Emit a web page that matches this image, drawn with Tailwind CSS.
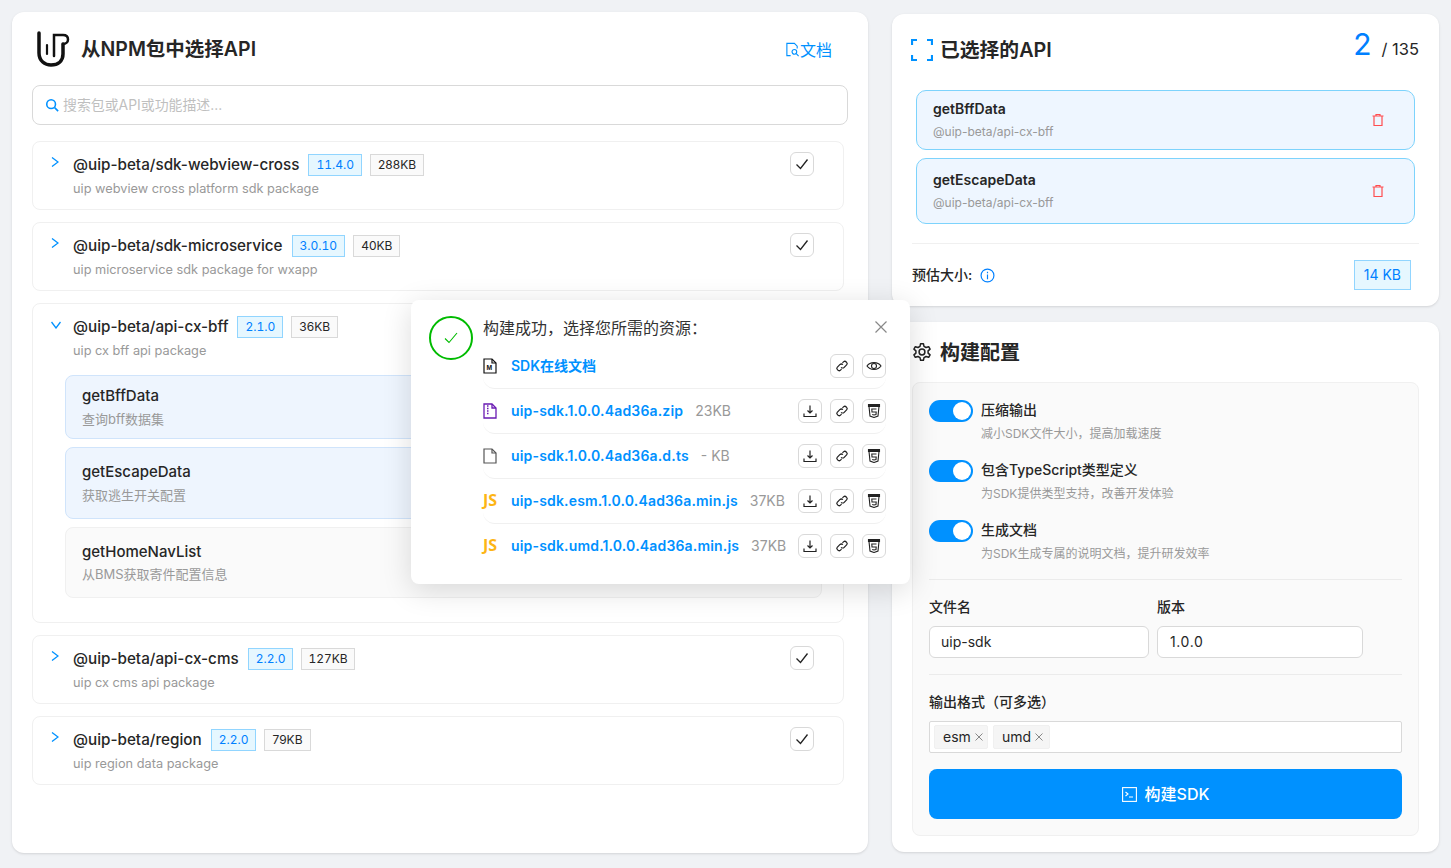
<!DOCTYPE html>
<html lang="zh-CN">

<head>
    <meta charset="UTF-8" />
    <meta name="viewport" content="width=device-width, initial-scale=1.0" />
    <title>从NPM包中选择API</title>
    <script src="https://cdn.jsdelivr.net/npm/@tailwindcss/browser@4"></script>
</head>

<body>
    <div class="relative flex h-[868px] w-[1451px] items-start gap-6 overflow-hidden bg-[#f0f2f5] px-3 font-['Inter','Noto_Sans_CJK_SC',sans-serif] text-[#262626]">

        <!-- left panel -->
        <div class="mt-3 h-[841px] w-[856px] shrink-0 rounded-xl bg-white px-5 shadow-sm">
            <div class="flex h-[73px] items-center">
                <svg class="ml-1 mr-[9px] mt-[3px] h-[38px] w-[36px] shrink-0" viewBox="0 0 36 38" fill="none" stroke="#111" stroke-linecap="round">
                    <path d="M3 2V22C3 30 9 34 15 34C22 34 27 30 27 23V13" stroke-width="3.5" />
                    <path d="M11 14V23" stroke-width="2.2" />
                    <path d="M18 25V4H27C30.500 4 32 6 32 8.500C32 11 30 13 27 13" stroke-width="2.500" />
                </svg>
                <h1 class="mt-[2px] text-[19.5px] font-semibold text-[#262626]">从NPM包中选择API</h1>
                <a class="ml-auto mr-4 mt-[2px] flex items-center text-base text-[#0091ff]">
                    <svg class="h-[15px] w-[15px]" viewBox="0 0 16 16" fill="none" stroke="currentColor" stroke-width="1.200">
                        <path d="M6 14.500H2V1.500H10L13 4.500V7" />
                        <circle cx="10" cy="10.500" r="2.500" />
                        <path d="M12 12.500L14.500 15" />
                    </svg>
                    文档
                </a>
            </div>

            <div class="flex h-10 w-[816px] items-center gap-1 rounded-lg border border-[#d9d9d9] px-3 text-[13.9px] text-[#bfbfbf]">
                <svg class="h-3.5 w-3.5" viewBox="0 0 16 16" fill="none" stroke="#0091ff" stroke-width="1.800">
                    <circle cx="7" cy="7" r="5" />
                    <path d="M11 11L15 15" />
                </svg>
                搜索包或API或功能描述...
            </div>

            <div class="mt-4 flex w-[812px] flex-col gap-3">
                <div class="flex h-[69px] rounded-lg border border-[#f0f0f0] pl-[18px] pr-[29px] pt-3">
                    <svg class="mr-3.5 mt-[3px] h-2.5 w-2 shrink-0" viewBox="0 0 8 10" fill="none" stroke="#0091ff" stroke-width="1.300"><path d="M1 0.500L7 5L1 9.500" /></svg>
                    <div class="flex-1">
                        <div class="flex h-[22px] items-center gap-2">
                            <span class="text-[15.25px] font-medium">@uip-beta/sdk-webview-cross</span>
                            <span class="ml-[1px] flex h-[22px] items-center border border-[#91d5ff] bg-[#e6f7ff] px-[7px] text-xs tabular-nums text-[#0080ff]">11.4.0</span>
                            <span class="flex h-[22px] items-center border border-[#d9d9d9] bg-[#fafafa] px-[7px] text-xs">288KB</span>
                        </div>
                        <p class="mt-[3px] text-[12.75px] leading-5 text-[#999]">uip webview cross platform sdk package</p>
                    </div>
                    <span class="-mt-[2px] flex h-6 w-6 items-center justify-center rounded-md border border-[#d9d9d9]">
                        <svg class="h-4 w-4" viewBox="0 0 16 16" fill="none" stroke="#222" stroke-width="1.300"><path d="M2.500 8.500L6.500 12.500L13.500 3.500" /></svg>
                    </span>
                </div>

                <div class="flex h-[69px] rounded-lg border border-[#f0f0f0] pl-[18px] pr-[29px] pt-3">
                    <svg class="mr-3.5 mt-[3px] h-2.5 w-2 shrink-0" viewBox="0 0 8 10" fill="none" stroke="#0091ff" stroke-width="1.300"><path d="M1 0.500L7 5L1 9.500" /></svg>
                    <div class="flex-1">
                        <div class="flex h-[22px] items-center gap-2">
                            <span class="text-[15.25px] font-medium">@uip-beta/sdk-microservice</span>
                            <span class="ml-[1px] flex h-[22px] items-center border border-[#91d5ff] bg-[#e6f7ff] px-[7px] text-xs tabular-nums text-[#0080ff]">3.0.10</span>
                            <span class="flex h-[22px] items-center border border-[#d9d9d9] bg-[#fafafa] px-[7px] text-xs">40KB</span>
                        </div>
                        <p class="mt-[3px] text-[12.75px] leading-5 text-[#999]">uip microservice sdk package for wxapp</p>
                    </div>
                    <span class="-mt-[2px] flex h-6 w-6 items-center justify-center rounded-md border border-[#d9d9d9]">
                        <svg class="h-4 w-4" viewBox="0 0 16 16" fill="none" stroke="#222" stroke-width="1.300"><path d="M2.500 8.500L6.500 12.500L13.500 3.500" /></svg>
                    </span>
                </div>

                <!-- expanded package -->
                <div class="h-[320px] rounded-lg border border-[#f0f0f0] pl-[18px] pr-[21px] pt-3">
                    <div class="flex pr-2">
                        <svg class="mr-3 mt-[5px] h-2 w-2.5 shrink-0" viewBox="0 0 10 8" fill="none" stroke="#0091ff" stroke-width="1.300"><path d="M0.500 1L5 7L9.500 1" /></svg>
                        <div class="flex-1">
                            <div class="flex h-[22px] items-center gap-2">
                                <span class="text-[15.25px] font-medium">@uip-beta/api-cx-bff</span>
                                <span class="ml-[1px] flex h-[22px] items-center border border-[#91d5ff] bg-[#e6f7ff] px-[7px] text-xs tabular-nums text-[#0080ff]">2.1.0</span>
                                <span class="flex h-[22px] items-center border border-[#d9d9d9] bg-[#fafafa] px-[7px] text-xs">36KB</span>
                            </div>
                            <p class="mt-[3px] text-[12.75px] leading-5 text-[#999]">uip cx bff api package</p>
                        </div>
                    </div>
                    <div class="ml-[14px] mt-[14px] flex flex-col gap-2">
                        <div class="flex h-16 flex-col justify-center rounded-lg border border-[#d0e4fb] bg-[#eef5fe] pl-4">
                            <p class="text-[15px] font-medium leading-[22px]">getBffData</p>
                            <p class="mt-[2px] text-[13px] leading-5 text-[#999]">查询bff数据集</p>
                        </div>
                        <div class="flex h-[72px] flex-col justify-center rounded-lg border border-[#d0e4fb] bg-[#eef5fe] pl-4">
                            <p class="text-[15px] font-medium leading-[22px]">getEscapeData</p>
                            <p class="mt-[2px] text-[13px] leading-5 text-[#999]">获取逃生开关配置</p>
                        </div>
                        <div class="flex h-[71px] flex-col justify-center rounded-lg border border-[#f0f0f0] bg-[#fafafa] pl-4">
                            <p class="text-[15px] font-medium leading-[22px]">getHomeNavList</p>
                            <p class="mt-[1px] text-[13px] leading-5 text-[#999]">从BMS获取寄件配置信息</p>
                        </div>
                    </div>
                </div>

                <div class="flex h-[69px] rounded-lg border border-[#f0f0f0] pl-[18px] pr-[29px] pt-3">
                    <svg class="mr-3.5 mt-[3px] h-2.5 w-2 shrink-0" viewBox="0 0 8 10" fill="none" stroke="#0091ff" stroke-width="1.300"><path d="M1 0.500L7 5L1 9.500" /></svg>
                    <div class="flex-1">
                        <div class="flex h-[22px] items-center gap-2">
                            <span class="text-[15.25px] font-medium">@uip-beta/api-cx-cms</span>
                            <span class="ml-[1px] flex h-[22px] items-center border border-[#91d5ff] bg-[#e6f7ff] px-[7px] text-xs tabular-nums text-[#0080ff]">2.2.0</span>
                            <span class="flex h-[22px] items-center border border-[#d9d9d9] bg-[#fafafa] px-[6px] text-xs tabular-nums">127KB</span>
                        </div>
                        <p class="mt-[3px] text-[12.75px] leading-5 text-[#999]">uip cx cms api package</p>
                    </div>
                    <span class="-mt-[2px] flex h-6 w-6 items-center justify-center rounded-md border border-[#d9d9d9]">
                        <svg class="h-4 w-4" viewBox="0 0 16 16" fill="none" stroke="#222" stroke-width="1.300"><path d="M2.500 8.500L6.500 12.500L13.500 3.500" /></svg>
                    </span>
                </div>

                <div class="flex h-[69px] rounded-lg border border-[#f0f0f0] pl-[18px] pr-[29px] pt-3">
                    <svg class="mr-3.5 mt-[3px] h-2.5 w-2 shrink-0" viewBox="0 0 8 10" fill="none" stroke="#0091ff" stroke-width="1.300"><path d="M1 0.500L7 5L1 9.500" /></svg>
                    <div class="flex-1">
                        <div class="flex h-[22px] items-center gap-2">
                            <span class="text-[15.25px] font-medium">@uip-beta/region</span>
                            <span class="ml-[1px] flex h-[22px] items-center border border-[#91d5ff] bg-[#e6f7ff] px-[7px] text-xs tabular-nums text-[#0080ff]">2.2.0</span>
                            <span class="flex h-[22px] items-center border border-[#d9d9d9] bg-[#fafafa] px-[7px] text-xs">79KB</span>
                        </div>
                        <p class="mt-[3px] text-[12.75px] leading-5 text-[#999]">uip region data package</p>
                    </div>
                    <span class="-mt-[2px] flex h-6 w-6 items-center justify-center rounded-md border border-[#d9d9d9]">
                        <svg class="h-4 w-4" viewBox="0 0 16 16" fill="none" stroke="#222" stroke-width="1.300"><path d="M2.500 8.500L6.500 12.500L13.500 3.500" /></svg>
                    </span>
                </div>
            </div>
        </div>

        <!-- right column -->
        <div class="mt-3.5 flex w-[547px] shrink-0 flex-col gap-4">
            <div class="h-[292px] rounded-xl bg-white px-5 shadow-sm">
                <div class="flex h-[76px] items-start pt-3">
                    <div class="flex h-12 items-center">
                        <svg class="-ml-px mr-[7px] h-[22px] w-[22px]" viewBox="0 0 22 22" fill="none" stroke="#0091ff" stroke-width="2.200">
                            <path d="M1 6V1H6M16 1H21V6M21 16V21H16M6 21H1V16" />
                        </svg>
                        <h2 class="mt-[2px] text-[19.8px] font-semibold">已选择的API</h2>
                    </div>
                    <div class="-mt-[2px] ml-auto flex items-baseline">
                        <span class="text-[30px] leading-10 text-[#0080ff]">2</span>
                        <span class="ml-2.5 text-[16.5px]">/ 135</span>
                    </div>
                </div>
                <div class="flex flex-col gap-2 pl-1 pr-1">
                    <div class="flex h-[60px] items-center justify-between rounded-[10px] border border-[#7dd3fc] bg-[#eef6ff] pl-4 pr-[29px]">
                        <div>
                            <p class="text-sm font-semibold leading-[18px]">getBffData</p>
                            <p class="mt-[6px] text-xs leading-4 text-[#999]">@uip-beta/api-cx-bff</p>
                        </div>
                        <svg class="h-3.5 w-3.5" viewBox="0 0 14 14" fill="none" stroke="#ff4d4f" stroke-width="1.200"><path d="M1.500 3H12.500M5 3V1.500H9V3M3 3V12.500H11V3" /></svg>
                    </div>
                    <div class="flex h-[66px] items-center justify-between rounded-[10px] border border-[#7dd3fc] bg-[#eef6ff] pl-4 pr-[29px]">
                        <div>
                            <p class="text-sm font-semibold leading-[18px]">getEscapeData</p>
                            <p class="mt-[6px] text-xs leading-4 text-[#999]">@uip-beta/api-cx-bff</p>
                        </div>
                        <svg class="h-3.5 w-3.5" viewBox="0 0 14 14" fill="none" stroke="#ff4d4f" stroke-width="1.200"><path d="M1.500 3H12.500M5 3V1.500H9V3M3 3V12.500H11V3" /></svg>
                    </div>
                </div>
                <div class="mt-[19px] flex h-[47px] items-end justify-between border-t border-[#f0f0f0] pr-2">
                    <div class="flex h-[30px] items-center gap-2 text-sm font-medium">
                        预估大小:
                        <svg class="h-[15px] w-[15px]" viewBox="0 0 14 14" fill="none" stroke="#0080ff" stroke-width="1.100"><circle cx="7" cy="7" r="6" /><path d="M7 6V10.500M7 3.500V4.800" /></svg>
                    </div>
                    <span class="flex h-[30px] items-center border border-[#91d5ff] bg-[#e6f7ff] px-[9px] text-sm text-[#0080ff]">14 KB</span>
                </div>
            </div>

            <div class="h-[530px] rounded-xl bg-white px-5 shadow-sm">
                <div class="flex h-[60px] items-center">
                    <svg class="mr-2 h-5 w-5" viewBox="0 0 24 24" fill="none" stroke="#222" stroke-width="1.800" stroke-linejoin="round">
                        <path d="M10.300 2H13.700L14.400 5.200L16.800 6.600L20 5.600L21.700 8.500L19.300 10.700V13.300L21.700 15.500L20 18.400L16.800 17.400L14.400 18.800L13.700 22H10.300L9.600 18.800L7.200 17.400L4 18.400L2.300 15.500L4.700 13.300V10.700L2.300 8.500L4 5.600L7.200 6.600L9.600 5.200Z" />
                        <circle cx="12" cy="12" r="3.500" />
                    </svg>
                    <h2 class="mt-[2px] text-[20px] font-semibold">构建配置</h2>
                </div>
                <div class="h-[454px] rounded-lg border border-[#f0f0f0] bg-[#fafafa] px-4 pt-[17px]">
                    <div class="flex h-[60px] items-start gap-2">
                        <span class="flex h-[22px] w-11 items-center justify-end rounded-full bg-[#0091ff] pr-0.5"><span class="h-[18px] w-[18px] rounded-full bg-white"></span></span>
                        <div>
                            <p class="text-sm font-medium leading-5">压缩输出</p>
                            <p class="mt-1 text-xs leading-5 text-[#999]">减小SDK文件大小，提高加载速度</p>
                        </div>
                    </div>
                    <div class="flex h-[60px] items-start gap-2">
                        <span class="flex h-[22px] w-11 items-center justify-end rounded-full bg-[#0091ff] pr-0.5"><span class="h-[18px] w-[18px] rounded-full bg-white"></span></span>
                        <div>
                            <p class="text-sm font-medium leading-5">包含TypeScript类型定义</p>
                            <p class="mt-1 text-xs leading-5 text-[#999]">为SDK提供类型支持，改善开发体验</p>
                        </div>
                    </div>
                    <div class="flex h-[59px] items-start gap-2">
                        <span class="flex h-[22px] w-11 items-center justify-end rounded-full bg-[#0091ff] pr-0.5"><span class="h-[18px] w-[18px] rounded-full bg-white"></span></span>
                        <div>
                            <p class="text-sm font-medium leading-5">生成文档</p>
                            <p class="mt-1 text-xs leading-5 text-[#999]">为SDK生成专属的说明文档，提升研发效率</p>
                        </div>
                    </div>
                    <div class="border-t border-[#ebebeb] pt-[17px]">
                        <div class="flex gap-2">
                            <div class="w-[220px]">
                                <p class="text-sm font-medium leading-5">文件名</p>
                                <div class="mt-[9px] flex h-8 items-center rounded-md border border-[#d9d9d9] bg-white px-[11px] text-sm">uip-sdk</div>
                            </div>
                            <div class="w-[206px]">
                                <p class="text-sm font-medium leading-5">版本</p>
                                <div class="mt-[9px] flex h-8 items-center rounded-md border border-[#d9d9d9] bg-white px-3 text-sm tracking-[0.6px]">1.0.0</div>
                            </div>
                        </div>
                    </div>
                    <div class="mt-4 border-t border-[#ebebeb] pt-[17px]">
                        <p class="text-sm font-medium leading-5">输出格式（可多选）</p>
                        <div class="mt-[9px] flex h-8 items-center gap-[5px] rounded-[2px] border border-[#d9d9d9] bg-white px-1 text-sm">
                            <span class="flex h-6 w-[54px] items-center gap-1 rounded-[2px] border border-[#f0f0f0] bg-[#f5f5f5] pl-2">esm
                                <svg class="h-2 w-2" viewBox="0 0 8 8" stroke="#888"><path d="M0.500 0.500L7.500 7.500M7.500 0.500L0.500 7.500" /></svg></span>
                            <span class="flex h-6 w-[57px] items-center gap-1 rounded-[2px] border border-[#f0f0f0] bg-[#f5f5f5] pl-2">umd
                                <svg class="h-2 w-2" viewBox="0 0 8 8" stroke="#888"><path d="M0.500 0.500L7.500 7.500M7.500 0.500L0.500 7.500" /></svg></span>
                        </div>
                        <button class="mt-4 flex h-[50px] w-full items-center justify-center gap-2 rounded-lg bg-[#0091ff] text-base font-medium text-white">
                            <svg class="h-[15px] w-[15px]" viewBox="0 0 15 15" fill="none" stroke="white" stroke-width="1.100"><rect x="0.600" y="0.600" width="13.800" height="13.800" /><path d="M3.500 5L6 7L3.500 9M7 10H11" /></svg>
                            构建SDK
                        </button>
                    </div>
                </div>
            </div>
        </div>

        <!-- build result popup -->
        <div class="absolute left-[411px] top-[300px] flex h-[284px] w-[499px] rounded-lg bg-white pl-[18px] pr-6 pt-4 shadow-[0_6px_30px_rgba(0,0,0,0.14)]">
            <span class="mr-2.5 flex h-11 w-11 shrink-0 items-center justify-center rounded-full border-[2.500px] border-[#00bb00]">
                <svg class="h-4 w-4" viewBox="0 0 16 16" fill="none" stroke="#00bb00" stroke-width="1.100"><path d="M2 8.500L6 12.500L14 3" /></svg>
            </span>
            <div class="flex-1">
                <div class="flex h-6 items-center justify-between text-base text-[#333]">
                    <span>构建成功，选择您所需的资源：</span>
                    <svg class="h-3 w-3 -translate-y-px translate-x-px" viewBox="0 0 12 12" stroke="#888" stroke-width="1.200"><path d="M0.500 0.500L11.500 11.500M11.500 0.500L0.500 11.500" /></svg>
                </div>
                <div class="mt-1">
                    <div class="flex h-[45px] items-start rounded-b-xl border-b border-[#f0f0f0] pt-2.5">
                        <span class="flex h-6 w-7 shrink-0 items-center">
                            <svg class="h-4 w-[14px]" viewBox="0 0 14 16" fill="none" stroke="#111" stroke-width="1.200"><path d="M1 1H9L13 5V15H1Z" /><path d="M9 1V5H13" /><text x="3.500" y="12" font-size="6" font-weight="700" fill="#111" stroke="none">M</text></svg>
                        </span>
                        <a class="text-sm font-semibold leading-6 text-[#0091ff]">SDK在线文档</a>
                        <span class="ml-auto flex gap-2">
                            <span class="flex h-6 w-6 items-center justify-center rounded-md border border-[#d9d9d9]"><svg class="h-3.5 w-3.5" viewBox="0 0 16 16" fill="none" stroke="#222" stroke-width="1.400"><path d="M7 9.500C8 10.500 9.500 10.500 10.500 9.500L13.500 6.500C15 5 12 1.500 10 3L8.500 4.500M9 6.500C8 5.500 6.500 5.500 5.500 6.500L2.500 9.500C1 11 4 14.500 6 13L7.500 11.500" /></svg></span>
                            <span class="flex h-6 w-6 items-center justify-center rounded-md border border-[#d9d9d9]"><svg class="h-4 w-4" viewBox="0 0 16 16" fill="none" stroke="#222" stroke-width="1.100"><path d="M1 8C4 3.500 12 3.500 15 8C12 12.500 4 12.500 1 8Z" /><circle cx="8" cy="8" r="2.500" /></svg></span>
                        </span>
                    </div>
                    <div class="flex h-[45px] items-start rounded-b-xl border-b border-[#f0f0f0] pt-2.5">
                        <span class="flex h-6 w-7 shrink-0 items-center">
                            <svg class="h-4 w-[14px]" viewBox="0 0 14 16" fill="none" stroke="#6a1bb3" stroke-width="1.300"><path d="M1 1H9L13 5V15H1Z" /><path d="M9 1V5H13" /><path d="M4 3H6M4 5.500H6M4 8H6M4 10.500H6" stroke-width="1.500" stroke-dasharray="1.500 0.500" /></svg>
                        </span>
                        <a class="text-sm font-semibold leading-6 tracking-[0.17px] text-[#0091ff]">uip-sdk.1.0.0.4ad36a.zip</a>
                        <span class="ml-3 text-sm leading-6 text-[#999]">23KB</span>
                        <span class="ml-auto flex gap-2">
                            <span class="flex h-6 w-6 items-center justify-center rounded-md border border-[#d9d9d9]"><svg class="h-3.5 w-3.5" viewBox="0 0 14 14" fill="none" stroke="#222" stroke-width="1.200"><path d="M7 1.500V9M4.500 6.500L7 9L9.500 6.500M1 9.500V12.500H13V9.500" /></svg></span>
                            <span class="flex h-6 w-6 items-center justify-center rounded-md border border-[#d9d9d9]"><svg class="h-3.5 w-3.5" viewBox="0 0 16 16" fill="none" stroke="#222" stroke-width="1.400"><path d="M7 9.500C8 10.500 9.500 10.500 10.500 9.500L13.500 6.500C15 5 12 1.500 10 3L8.500 4.500M9 6.500C8 5.500 6.500 5.500 5.500 6.500L2.500 9.500C1 11 4 14.500 6 13L7.500 11.500" /></svg></span>
                            <span class="flex h-6 w-6 items-center justify-center rounded-md border border-[#d9d9d9]"><svg class="h-3.5 w-3.5" viewBox="0 0 14 14" fill="none" stroke="#222" stroke-width="1.100"><path d="M1.500 0.500H12.500V2.500H1.500Z" fill="#222" /><path d="M2 2.500L3 12L7 13.500L11 12L12 2.500" /><path d="M9.500 5H4.800L5 8H9.200L9 10.500L7 11L5.200 10.500" /></svg></span>
                        </span>
                    </div>
                    <div class="flex h-[45px] items-start rounded-b-xl border-b border-[#f0f0f0] pt-2.5">
                        <span class="flex h-6 w-7 shrink-0 items-center">
                            <svg class="h-4 w-[14px]" viewBox="0 0 14 16" fill="none" stroke="#555" stroke-width="1.200"><path d="M1 1H9L13 5V15H1Z" /><path d="M9 1V5H13" /></svg>
                        </span>
                        <a class="text-sm font-semibold leading-6 tracking-[0.17px] text-[#0091ff]">uip-sdk.1.0.0.4ad36a.d.ts</a>
                        <span class="ml-3 text-sm leading-6 text-[#999]">- KB</span>
                        <span class="ml-auto flex gap-2">
                            <span class="flex h-6 w-6 items-center justify-center rounded-md border border-[#d9d9d9]"><svg class="h-3.5 w-3.5" viewBox="0 0 14 14" fill="none" stroke="#222" stroke-width="1.200"><path d="M7 1.500V9M4.500 6.500L7 9L9.500 6.500M1 9.500V12.500H13V9.500" /></svg></span>
                            <span class="flex h-6 w-6 items-center justify-center rounded-md border border-[#d9d9d9]"><svg class="h-3.5 w-3.5" viewBox="0 0 16 16" fill="none" stroke="#222" stroke-width="1.400"><path d="M7 9.500C8 10.500 9.500 10.500 10.500 9.500L13.500 6.500C15 5 12 1.500 10 3L8.500 4.500M9 6.500C8 5.500 6.500 5.500 5.500 6.500L2.500 9.500C1 11 4 14.500 6 13L7.500 11.500" /></svg></span>
                            <span class="flex h-6 w-6 items-center justify-center rounded-md border border-[#d9d9d9]"><svg class="h-3.5 w-3.5" viewBox="0 0 14 14" fill="none" stroke="#222" stroke-width="1.100"><path d="M1.500 0.500H12.500V2.500H1.500Z" fill="#222" /><path d="M2 2.500L3 12L7 13.500L11 12L12 2.500" /><path d="M9.500 5H4.800L5 8H9.200L9 10.500L7 11L5.200 10.500" /></svg></span>
                        </span>
                    </div>
                    <div class="flex h-[45px] items-start rounded-b-xl border-b border-[#f0f0f0] pt-2.5">
                        <span class="-mt-px w-7 shrink-0 font-['Open_Sans',sans-serif] text-base font-bold leading-6 text-[#fdb515]">JS</span>
                        <a class="text-sm font-semibold leading-6 tracking-[0.17px] text-[#0091ff]">uip-sdk.esm.1.0.0.4ad36a.min.js</a>
                        <span class="ml-3 text-sm leading-6 text-[#999]">37KB</span>
                        <span class="ml-auto flex gap-2">
                            <span class="flex h-6 w-6 items-center justify-center rounded-md border border-[#d9d9d9]"><svg class="h-3.5 w-3.5" viewBox="0 0 14 14" fill="none" stroke="#222" stroke-width="1.200"><path d="M7 1.500V9M4.500 6.500L7 9L9.500 6.500M1 9.500V12.500H13V9.500" /></svg></span>
                            <span class="flex h-6 w-6 items-center justify-center rounded-md border border-[#d9d9d9]"><svg class="h-3.5 w-3.5" viewBox="0 0 16 16" fill="none" stroke="#222" stroke-width="1.400"><path d="M7 9.500C8 10.500 9.500 10.500 10.500 9.500L13.500 6.500C15 5 12 1.500 10 3L8.500 4.500M9 6.500C8 5.500 6.500 5.500 5.500 6.500L2.500 9.500C1 11 4 14.500 6 13L7.500 11.500" /></svg></span>
                            <span class="flex h-6 w-6 items-center justify-center rounded-md border border-[#d9d9d9]"><svg class="h-3.5 w-3.5" viewBox="0 0 14 14" fill="none" stroke="#222" stroke-width="1.100"><path d="M1.500 0.500H12.500V2.500H1.500Z" fill="#222" /><path d="M2 2.500L3 12L7 13.500L11 12L12 2.500" /><path d="M9.500 5H4.800L5 8H9.200L9 10.500L7 11L5.200 10.500" /></svg></span>
                        </span>
                    </div>
                    <div class="flex h-[45px] items-start pt-2.5">
                        <span class="-mt-px w-7 shrink-0 font-['Open_Sans',sans-serif] text-base font-bold leading-6 text-[#fdb515]">JS</span>
                        <a class="text-sm font-semibold leading-6 tracking-[0.17px] text-[#0091ff]">uip-sdk.umd.1.0.0.4ad36a.min.js</a>
                        <span class="ml-3 text-sm leading-6 text-[#999]">37KB</span>
                        <span class="ml-auto flex gap-2">
                            <span class="flex h-6 w-6 items-center justify-center rounded-md border border-[#d9d9d9]"><svg class="h-3.5 w-3.5" viewBox="0 0 14 14" fill="none" stroke="#222" stroke-width="1.200"><path d="M7 1.500V9M4.500 6.500L7 9L9.500 6.500M1 9.500V12.500H13V9.500" /></svg></span>
                            <span class="flex h-6 w-6 items-center justify-center rounded-md border border-[#d9d9d9]"><svg class="h-3.5 w-3.5" viewBox="0 0 16 16" fill="none" stroke="#222" stroke-width="1.400"><path d="M7 9.500C8 10.500 9.500 10.500 10.500 9.500L13.500 6.500C15 5 12 1.500 10 3L8.500 4.500M9 6.500C8 5.500 6.500 5.500 5.500 6.500L2.500 9.500C1 11 4 14.500 6 13L7.500 11.500" /></svg></span>
                            <span class="flex h-6 w-6 items-center justify-center rounded-md border border-[#d9d9d9]"><svg class="h-3.5 w-3.5" viewBox="0 0 14 14" fill="none" stroke="#222" stroke-width="1.100"><path d="M1.500 0.500H12.500V2.500H1.500Z" fill="#222" /><path d="M2 2.500L3 12L7 13.500L11 12L12 2.500" /><path d="M9.500 5H4.800L5 8H9.200L9 10.500L7 11L5.200 10.500" /></svg></span>
                        </span>
                    </div>
                </div>
            </div>
        </div>
    </div>
</body>

</html>
